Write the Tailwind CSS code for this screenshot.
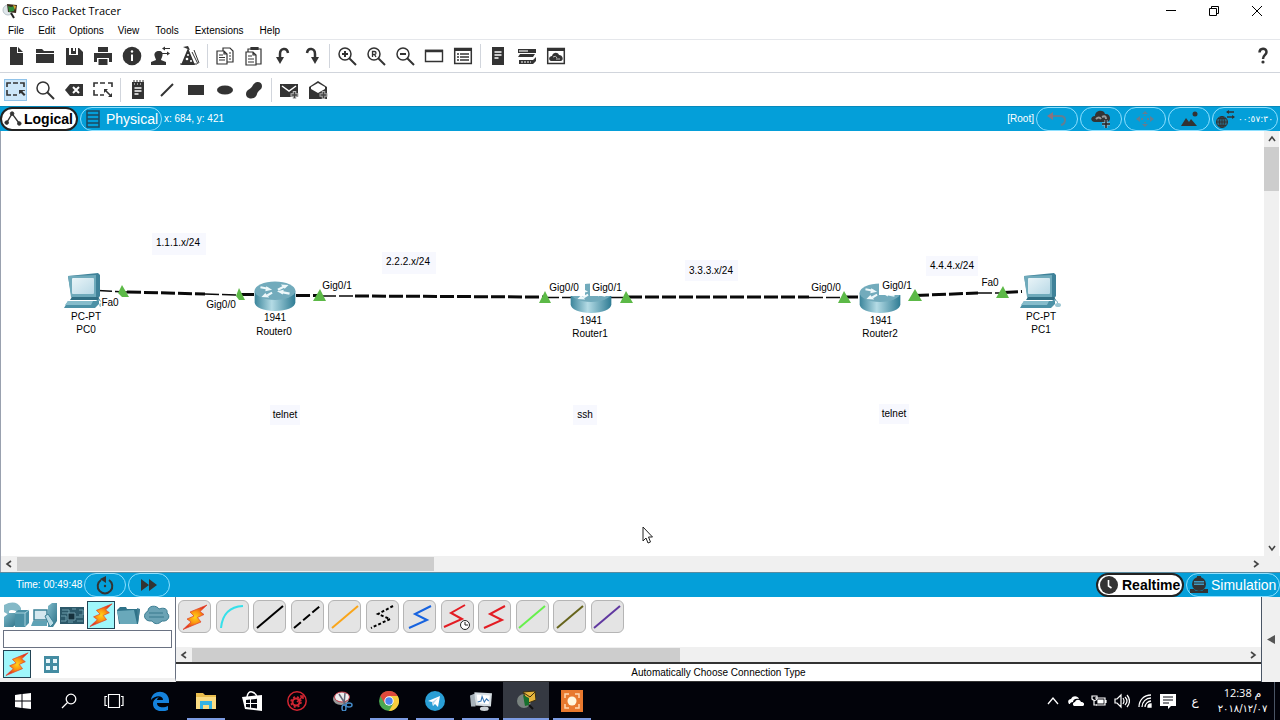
<!DOCTYPE html>
<html lang="en">
<head>
    <meta charset="utf-8">
    <title>Cisco Packet Tracer</title>
    <meta name="viewport" content="width=device-width, initial-scale=1">
    <script src="https://cdn.jsdelivr.net/npm/@tailwindcss/browser@4"></script>
</head>
<body class="h-screen flex flex-col overflow-hidden bg-white text-black text-[10px] leading-4 font-['Liberation_Sans',Arial,sans-serif]">

    <!-- Shared shapes -->
    <svg class="absolute size-0" aria-hidden="true">
        <defs>
            <radialGradient id="fire"><stop offset="0" stop-color="#ffd21a"/><stop offset=".45" stop-color="#fb9a12"/><stop offset="1" stop-color="#e3301b"/></radialGradient>
            <linearGradient id="metal"><stop offset="0" stop-color="#3b859b"/><stop offset=".42" stop-color="#b4dbe5"/><stop offset="1" stop-color="#2f7c94"/></linearGradient>
            <linearGradient id="teal" x2="1" y2="1"><stop offset="0" stop-color="#7db9c9"/><stop offset="1" stop-color="#2f7389"/></linearGradient>
            <linearGradient id="screen" x2="1" y2="1"><stop offset="0" stop-color="#e9f4f8"/><stop offset="1" stop-color="#b9d9e6"/></linearGradient>
            <symbol id="bolt" viewBox="0 0 28 28"><path d="M26 2 9 9l4 4-7 3 4 3L2 26.500 20 19l-3.500-4.500 6.500-3-4-3z" fill="url(#fire)" stroke="#e0402a" stroke-width=".7"/></symbol>
            <symbol id="router" viewBox="0 0 42 32">
                <path d="M0 10v12c0 5 9 9 21 9s21-4 21-9V10z" fill="url(#metal)"/>
                <ellipse cx="21" cy="10" rx="21" ry="9.500" fill="#72abbc"/>
                <path d="M6 6.500 14 8M24 9l6-3M18 12l-5 3M36 13l-8-1.500" fill="none" stroke="#eef8fa" stroke-width="2.200"/>
                <path d="M12 5.500 18 9l-7 1.500zM27 3.500 35 4l-4 4zM15 17l-8-.5 4-4zM30 9l-7 1.500 6 3.500z" fill="#eef8fa"/>
            </symbol>
            <symbol id="pc" viewBox="0 0 42 36">
                <path d="M4 3 34 0l2 2v21l-3 4H8z" fill="#3f8299"/>
                <path d="M4 3 32 2v22H7z" fill="#6faabb"/>
                <rect x="8" y="5" width="22" height="16" rx="1" fill="url(#screen)"/>
                <path d="M8 24h26l2 3H6z" fill="#316f84"/>
                <path d="M4 28h28l3-2v5l-4 4H0z" fill="#4c91a6"/>
                <path d="M4 28h25l-2 4H1z" fill="#86bccb"/>
                <path d="M34 27q4 0 4 4" fill="none" stroke="#8eb9c6"/><ellipse cx="38" cy="32" rx="3" ry="2" fill="#9cc7d3"/>
            </symbol>
        </defs>
    </svg>

    <!-- Title bar -->
    <header class="flex items-center h-[22px] shrink-0">
        <svg class="size-4 ml-[2px]" viewBox="0 0 16 16"><circle cx="6" cy="7" r="5" fill="#dfe6ea" stroke="#b8c2c8"/><path d="M5 1l10 1-1 8-8-1z" fill="#3d2b1c"/><path d="M6 3l3 1 4-1-1 5-5 1z" fill="#2f8c3b"/><path d="M11 2l3 1-1 4z" fill="#d9a531"/><path d="M9 10l3 5" stroke="#222" stroke-width="2"/></svg>
        <h1 class="ml-1 text-[11px] font-['Open_Sans',sans-serif]">Cisco Packet Tracer</h1>
        <div class="ml-auto flex">
            <button aria-label="Minimize" class="w-[43px] flex justify-center"><svg class="size-3" viewBox="0 0 12 12"><path d="M1 5.500h10" stroke="#000"/></svg></button>
            <button aria-label="Restore" class="w-[43px] flex justify-center"><svg class="size-3" viewBox="0 0 12 12" fill="none" stroke="#000"><path d="M1.500 3.500h7v7h-7zM3.500 3.500v-2h7v7h-2"/></svg></button>
            <button aria-label="Close" class="w-[43px] mr-[2px] flex justify-center"><svg class="size-3" viewBox="0 0 12 12" stroke="#000"><path d="M1 1l10 10M11 1 1 11"/></svg></button>
        </div>
    </header>

    <!-- Menu -->
    <nav class="flex h-[18px] shrink-0 items-center pl-2 gap-[14px] border-b border-gray-200">
        <button>File</button>
        <button>Edit</button>
        <button>Options</button>
        <button>View</button>
        <button class="ml-[2px]">Tools</button>
        <button class="ml-[2px]">Extensions</button>
        <button class="ml-[2px]">Help</button>
    </nav>

    <!-- Main toolbar -->
    <div class="flex items-center h-[33px] shrink-0 pl-px border-b border-gray-300 text-[#333]">
        <button aria-label="New" class="w-[29px] flex justify-center"><svg class="size-5" viewBox="0 0 20 20" fill="currentColor"><path d="M4 1h7v6h6v12H4zM12 1l5 5h-5z"/></svg></button>
        <button aria-label="Open" class="w-[29px] flex justify-center"><svg class="size-5" viewBox="0 0 20 20" fill="currentColor"><path d="M1 3h6l2 2h10v2H1zM1 8h18v9H1z"/></svg></button>
        <button aria-label="Save" class="w-[29px] flex justify-center"><svg class="size-5" viewBox="0 0 20 20" fill="currentColor"><path d="M2 2h3v7h9V2h1l4 4v13H2zM7 2h2v3h2V2h1v6H7z"/></svg></button>
        <button aria-label="Print" class="w-[29px] flex justify-center"><svg class="size-5" viewBox="0 0 20 20" fill="currentColor"><path d="M5 1h10v5H5zM1 7h18v9h-3v-4H4v4H1zM5.500 13h9v6h-9z"/></svg></button>
        <button aria-label="Network information" class="w-[29px] flex justify-center"><svg class="size-5" viewBox="0 0 20 20"><circle cx="10" cy="10" r="9.300" fill="currentColor"/><path d="M10 8.500V15" stroke="#fff" stroke-width="2" fill="none"/><circle cx="10" cy="5.500" r="1.200" fill="#fff"/></svg></button>
        <button aria-label="User profile" class="w-[29px] flex justify-center"><svg class="size-5" viewBox="0 0 20 20" fill="currentColor"><path d="M8 5c3 0 4 2 3.500 4.500S10 13 10 14l5 2v3H0v-3l5-2c0-1-1-2-1.500-4.500S5 5 8 5z"/><path d="M12 2.500h7M11 7.500h7" stroke="currentColor" stroke-width="1.200"/><path d="M14 .5v4l-3-2zM16 5.500v4l3-2z"/></svg></button>
        <button aria-label="Activity wizard" class="w-[29px] flex justify-center"><svg class="size-5" viewBox="0 0 20 20"><path d="M8 2l7 17H1zM3 1l5-1 2 4z" fill="currentColor"/><path d="M0 18h17M12 6l6 12M14 4l5 13" stroke="currentColor"/><circle cx="8" cy="9" r="1" fill="#fff"/><circle cx="7" cy="13" r="1.300" fill="#fff"/><circle cx="11" cy="15" r="1" fill="#fff"/></svg></button>
        <div class="w-[6px] flex justify-center"><span class="w-px h-6 bg-gray-300"></span></div>
        <button aria-label="Copy" class="w-[29px] flex justify-center"><svg class="size-5" viewBox="0 0 20 20" fill="#fff" stroke="currentColor" stroke-width="1.200"><path d="M8 2h7l3 3v11H8z"/><path d="M2 5h7l3 3v10H2zM9 5v3h3"/><path d="M4 9h4M4 11.500h6M4 14h6M14 7h2M14 10h2M14 13h2"/></svg></button>
        <button aria-label="Paste" class="w-[29px] flex justify-center"><svg class="size-5" viewBox="0 0 20 20" fill="#fff" stroke="currentColor" stroke-width="1.200"><path d="M4 3h13v15H4z"/><path d="M7 1.500h7v2H7z" fill="currentColor"/><path d="M2 6h7l3 3v10H2zM9 6v3h3"/><path d="M4 10h4M4 13h6M4 16h6"/></svg></button>
        <button aria-label="Undo" class="w-[29px] flex justify-center"><svg class="size-5" viewBox="0 0 20 20"><path d="M7 13V8c0-6 7-7 8-1" fill="none" stroke="currentColor" stroke-width="2.500"/><path d="M3 11h8l-4 7z" fill="currentColor"/></svg></button>
        <button aria-label="Redo" class="w-[29px] flex justify-center"><svg class="size-5" viewBox="0 0 20 20"><path d="M13 13V8c0-6-7-7-8-1" fill="none" stroke="currentColor" stroke-width="2.500"/><path d="M9 11h8l-4 7z" fill="currentColor"/></svg></button>
        <div class="w-[6px] flex justify-center"><span class="w-px h-6 bg-gray-300"></span></div>
        <button aria-label="Zoom in" class="w-[29px] flex justify-center"><svg class="size-5" viewBox="0 0 20 20" fill="none" stroke="currentColor" stroke-width="1.500"><circle cx="8" cy="8" r="6"/><path d="M12 12l7 7M5 8h6M8 5v6" stroke-width="2"/></svg></button>
        <button aria-label="Zoom reset" class="w-[29px] flex justify-center"><svg class="size-5" viewBox="0 0 20 20" fill="none" stroke="currentColor" stroke-width="1.500"><circle cx="8" cy="8" r="6"/><path d="M12 12l7 7" stroke-width="2"/><path d="M6.500 11V5.500h2c2 0 2 3 0 3h-2M8.500 8.500l1.500 2.500" stroke-width="1.300"/></svg></button>
        <button aria-label="Zoom out" class="w-[29px] flex justify-center"><svg class="size-5" viewBox="0 0 20 20" fill="none" stroke="currentColor" stroke-width="1.500"><circle cx="8" cy="8" r="6"/><path d="M12 12l7 7M5 8h6" stroke-width="2"/></svg></button>
        <button aria-label="View toggle" class="w-[29px] flex justify-center"><svg class="size-5" viewBox="0 0 20 20" fill="none" stroke="currentColor"><path d="M1.500 4.500h17v11h-17z" stroke-width="1.400"/><path d="M1 5h18" stroke-width="2.500"/></svg></button>
        <button aria-label="View list" class="w-[29px] flex justify-center"><svg class="size-5" viewBox="0 0 20 20" fill="none" stroke="currentColor" stroke-width="1.500"><path d="M1.700 2.500h16.600v15H1.700z"/><path d="M1 3.500h18" stroke-width="3"/><path d="M7 8h9M7 11h9M7 14h9M4 8h2M4 11h2M4 14h2"/></svg></button>
        <div class="w-[6px] flex justify-center"><span class="w-px h-6 bg-gray-300"></span></div>
        <button aria-label="Palette" class="w-[29px] flex justify-center"><svg class="size-5" viewBox="0 0 20 20"><path d="M4 1h12v18H4z" fill="currentColor"/><path d="M6.500 6h7M6.500 9h7M6.500 12h4" stroke="#fff" stroke-width="1.500"/></svg></button>
        <button aria-label="Custom devices" class="w-[29px] flex justify-center"><svg class="size-5" viewBox="0 0 20 20"><path d="M1 3h18v4H1zM3 8h15l-2 3H1zM2 14h14l3-3v4l-3 3H2z" fill="currentColor"/><path d="M2 5h9" stroke="#ccc" stroke-width="1.500"/><path d="M4 16h10" stroke="#fff" stroke-dasharray="2 1"/></svg></button>
        <button aria-label="Cluster" class="w-[29px] flex justify-center"><svg class="size-5" viewBox="0 0 20 20"><path d="M1.700 2.500h16.600v15H1.700z" fill="none" stroke="currentColor" stroke-width="1.500"/><path d="M1 3.500h18" stroke="currentColor" stroke-width="3"/><path d="M5 15c-3-1-2-5 1-5 1-4 6-4 7-1 4 0 5 5 2 6z" fill="currentColor"/><path d="M7 11q3-2 4 1M10 13h4" stroke="#bbb" fill="none"/></svg></button>
        <button aria-label="Help" class="ml-auto w-[34px] flex justify-center"><svg class="size-5" viewBox="0 0 20 20"><path d="M6.500 6.500c0-5 7-5 7-.5 0 3-3.500 3-3.500 7" fill="none" stroke="currentColor" stroke-width="2.500"/><circle cx="10" cy="16" r="1.600" fill="currentColor"/></svg></button>
    </div>

    <!-- Drawing toolbar -->
    <div class="flex items-center h-[33px] shrink-0 pl-px text-[#333]">
        <button aria-label="Select" class="w-[29px] flex justify-center"><svg class="w-[23px] h-[22px] bg-[#cde6f8] outline outline-1 -outline-offset-1 outline-[#90c3ea]" viewBox="0 0 23 22"><path d="M3 8V4h4M9 4h5M16 4h4v4M20 11v1M3 11v5h4M9 16h4" fill="none" stroke="currentColor" stroke-width="1.600"/><path d="M15 11h5l-1.500 1.500 3 3-1.500 1.500-3-3L15 15z" fill="currentColor"/></svg></button>
        <button aria-label="Inspect" class="w-[29px] flex justify-center"><svg class="size-5" viewBox="0 0 20 20" fill="none" stroke="currentColor" stroke-width="1.500"><circle cx="8" cy="8" r="6"/><path d="M12 12l7 7" stroke-width="2"/></svg></button>
        <button aria-label="Delete" class="w-[29px] flex justify-center"><svg class="size-5" viewBox="0 0 20 20"><path d="M1 10l5-6h13v12H6z" fill="currentColor"/><path d="M9 7l6 6M15 7l-6 6" stroke="#fff" stroke-width="2"/></svg></button>
        <button aria-label="Resize" class="w-[29px] flex justify-center"><svg class="size-5" viewBox="0 0 20 20" fill="none" stroke="currentColor" stroke-width="1.600"><path d="M1 7V3h4M7 3h5M15 3h4v4M1 10v5h4M7 15h4M12 10l6 6"/><path d="M11 9h4l-4 4zM19 17v-4l-4 4z" fill="currentColor" stroke="none"/></svg></button>
        <div class="w-[6px] flex justify-center"><span class="w-px h-6 bg-gray-300"></span></div>
        <button aria-label="Place note" class="w-[29px] flex justify-center"><svg class="size-5" viewBox="0 0 20 20"><path d="M4 2h12v17H4z" fill="currentColor"/><path d="M6 0v4M9 0v4M12 0v4M15 0v4" stroke="currentColor"/><path d="M6 4h8" stroke="#fff" stroke-dasharray="1 2"/><path d="M6.500 8h7M6.500 11h7M6.500 14h4" stroke="#fff" stroke-width="1.400"/></svg></button>
        <button aria-label="Draw line" class="w-[29px] flex justify-center"><svg class="size-5" viewBox="0 0 20 20"><path d="M4 16 16 4" stroke="currentColor" stroke-width="2"/></svg></button>
        <button aria-label="Draw rectangle" class="w-[29px] flex justify-center"><svg class="size-5" viewBox="0 0 20 20"><path d="M2 5h16v10H2z" fill="currentColor"/></svg></button>
        <button aria-label="Draw ellipse" class="w-[29px] flex justify-center"><svg class="size-5" viewBox="0 0 20 20"><ellipse cx="10" cy="10" rx="8" ry="4.500" fill="currentColor"/></svg></button>
        <button aria-label="Draw freeform" class="w-[29px] flex justify-center"><svg class="size-5" viewBox="0 0 20 20"><path d="M9 5c2-4 9-4 9 1 0 4-4 4-5 8-1 6-11 6-11 0 0-5 5-4 7-9z" fill="currentColor"/></svg></button>
        <div class="w-[6px] flex justify-center"><span class="w-px h-6 bg-gray-300"></span></div>
        <button aria-label="Add simple PDU" class="w-[29px] flex justify-center"><svg class="size-5" viewBox="0 0 20 20"><path d="M1 4h18v13H1z" fill="currentColor"/><path d="M3 6l7 5 7-5" fill="none" stroke="#fff" stroke-width="1.500"/><path d="M15.500 11v8M11.500 15h8" stroke="#bbb" stroke-width="3.500"/><path d="M15.500 12v6M12.500 15h6" stroke="#444" stroke-width="1.500"/></svg></button>
        <button aria-label="Add complex PDU" class="w-[29px] flex justify-center"><svg class="size-5" viewBox="0 0 20 20"><path d="M10 1l9 6v12H1V7z" fill="currentColor"/><path d="M10 3l7 4v2l-7 4-7-4V7z" fill="#fff"/><path d="M15.500 11v8M11.500 15h8" stroke="#aaa" stroke-width="3.500"/><path d="M15.500 12v6M12.500 15h6" stroke="#444" stroke-width="1.500"/></svg></button>
    </div>

    <!-- Workspace bar -->
    <div class="flex items-center h-[25px] shrink-0 bg-[#049fd9] text-white border-t border-[#0789bb]">
        <button class="flex items-center h-6 w-[78px] pl-[2px] gap-[2px] rounded-full bg-white text-black border-2 border-[#222] text-sm font-bold"><svg class="size-[18px] shrink-0" viewBox="0 0 20 20" stroke="#333" fill="#333"><path d="M3 14 9 4l8 11" fill="none" stroke-width="1.500"/><circle cx="3" cy="14" r="2"/><circle cx="9" cy="4" r="2"/><circle cx="17" cy="15" r="2"/></svg>Logical</button>
        <button class="flex items-center h-6 w-[82px] ml-[2px] pl-[3px] gap-1 rounded-full border border-[#8ee0ff] text-sm"><svg class="size-[18px] shrink-0" viewBox="0 0 18 18" fill="none" stroke="#1c4a60" stroke-width="1.500"><path d="M3 1h12v16H3zM3 5h12M3 9h12M3 13h12"/></svg>Physical</button>
        <span class="ml-[2px]">x: 684, y: 421</span>
        <span class="ml-auto mr-[2px]">[Root]</span>
        <div class="flex gap-[2px] mr-[2px]">
            <button aria-label="Back" class="w-[42px] h-6 flex items-center justify-center rounded-full border border-[#8ee0ff]"><svg class="size-5" viewBox="0 0 20 20"><path d="M4 7h9q5 0 5 4t-4 5" fill="none" stroke="#617f93" stroke-width="2"/><path d="M0 7l6-4v8z" fill="#8a7480"/></svg></button>
            <button aria-label="New cluster" class="w-[42px] h-6 flex items-center justify-center rounded-full border border-[#8ee0ff]"><svg class="size-5" viewBox="0 0 20 20"><path d="M4 13c-5 0-5-6 0-6 0-6 9-7 10-2 6-1 7 8 1 8z" fill="#333"/><path d="M5 10q3-3 5 0M11 8q4-2 4 2" stroke="#999" fill="none" stroke-width="2"/><path d="M15 11v8M11 15h8" stroke="#9bc" stroke-width="3"/><path d="M15 11v8M11 15h8" stroke="#222" stroke-width="1.500"/></svg></button>
            <button aria-label="Move object" class="w-[42px] h-6 flex items-center justify-center rounded-full border border-[#8ee0ff]"><svg class="size-5" viewBox="0 0 20 20" fill="#617f93"><path d="M10 2l3 3H7zM10 18l3-3H7zM1 10l4-3v6zM19 10l-4-3v6z"/><path d="M6 9h2v2H6zM12 9h2v2h-2zM9 6h2v1H9zM9 13h2v1H9z"/></svg></button>
            <button aria-label="Set background" class="w-[42px] h-6 flex items-center justify-center rounded-full border border-[#8ee0ff]"><svg class="size-5" viewBox="0 0 20 20" fill="#333"><path d="M2 17l5-8 3 4 2-3 6 7z"/><circle cx="16" cy="5" r="2.500"/></svg></button>
            <button class="w-[66px] h-6 pl-[2px] pr-1 flex items-center justify-between rounded-full border border-[#8ee0ff] text-[9px] font-['DejaVu_Sans',sans-serif]"><svg class="size-5 shrink-0" viewBox="0 0 20 20" fill="none" stroke="#333"><circle cx="7" cy="13" r="5.500" fill="#2d6880"/><path d="M1.500 13h11M7 7.500v11M3 9.500h8M3 16.500h8"/><ellipse cx="7" cy="13" rx="2.500" ry="5.500"/><path d="M12 3h7M12 8h7" stroke-width="1.500"/><path d="M14 1v4l-3-2zM17 6v4l3-2z" fill="#333" stroke="none"/></svg><span dir="ltr">٠٠:٥٧:٣٠</span></button>
        </div>
    </div>

    <!-- Topology canvas with its scrollbars -->
    <main class="flex-1 min-h-0 flex flex-col border-l border-gray-400">
        <div class="flex-1 min-h-0 flex">
            <div class="relative flex-1 overflow-hidden">
                <!-- drawn in workspace units, y starts 131 below the window's top -->
                <svg class="absolute top-0 left-0 w-[1262px] h-[425px]" viewBox="1 131 1262 425" font-size="10" text-anchor="middle">
                    <g stroke="#0a0a0a" stroke-width="3" stroke-dasharray="14 3">
                        <path d="M127 292 205 294M296 295.500H318M355 296 545 297M628 297H809M915 295.500 978 293M1004 292.500 1022 291.500M844 297H862M240 294.500H257"/>
                        <path d="M98 290.500 127 292M205 294 240 295M322 296 355 296M545 297.500H572M609 297.500H628M809 297.500H844M978 293 1004 293" stroke-width="1.500"/>
                    </g>
                    <use href="#pc" x="64" y="273" width="42" height="36"/>
                    <use href="#pc" x="1020" y="273" width="42" height="36"/>
                    <use href="#router" x="254" y="281" width="42" height="31"/>
                    <use href="#router" x="570" y="283" width="42" height="31"/>
                    <use href="#router" x="859" y="283" width="42" height="31"/>
                    <path d="M547 280h38v16h-38zM590 280h35v16h-35zM879 278h35v17h-35zM101 297h21v11h-21z" fill="#fff"/>
                    <path d="M122 285l-4 8 4 4h7zM239 288l-3 8 3 4h6zM320 289l-7 12h13zM545 291l-6 12h12zM626 291l-6 12h13zM844 291l-6 12h13zM915 289l-7 12h14zM1003 286l-7 12h13z" fill="#5cb947"/>
                    <path d="M152 233h54v22h-54zM382 252h54v22h-54zM685 260h53v21h-53zM926 256h52v20h-52zM270 405h30v20h-30zM573 405h24v20h-24zM879 404h30v20h-30z" fill="#f7f8fe"/>
                    <text x="178" y="246">1.1.1.x/24</text>
                    <text x="408" y="265">2.2.2.x/24</text>
                    <text x="711" y="274">3.3.3.x/24</text>
                    <text x="952" y="269">4.4.4.x/24</text>
                    <text x="110" y="306">Fa0</text>
                    <text x="221" y="308">Gig0/0</text>
                    <text x="337" y="289">Gig0/1</text>
                    <text x="564" y="291">Gig0/0</text>
                    <text x="607" y="291">Gig0/1</text>
                    <text x="826" y="291">Gig0/0</text>
                    <text x="897" y="289">Gig0/1</text>
                    <text x="990" y="286">Fa0</text>
                    <text x="86" y="320">PC-PT</text>
                    <text x="86" y="333">PC0</text>
                    <text x="275" y="321">1941</text>
                    <text x="274" y="335">Router0</text>
                    <text x="591" y="324">1941</text>
                    <text x="590" y="337">Router1</text>
                    <text x="881" y="324">1941</text>
                    <text x="880" y="337">Router2</text>
                    <text x="1041" y="320">PC-PT</text>
                    <text x="1041" y="333">PC1</text>
                    <text x="285" y="418">telnet</text>
                    <text x="585" y="418">ssh</text>
                    <text x="894" y="417">telnet</text>
                    <path d="M643 527v14l3-3 2 5 2.500-1-2-5h4z" fill="#fff" stroke="#222"/>
                </svg>
            </div>
            <div class="w-[15px] mr-px flex flex-col items-center bg-[#f0f0f0]">
                <button aria-label="Scroll up" class="h-4 flex items-center"><svg class="size-2" viewBox="0 0 8 8" fill="none" stroke="#444" stroke-width="1.600"><path d="M1 6l3-4 3 4"/></svg></button>
                <div class="w-full h-11 bg-[#cdcdcd]"></div>
                <button aria-label="Scroll down" class="h-4 mt-auto flex items-center"><svg class="size-2" viewBox="0 0 8 8" fill="none" stroke="#444" stroke-width="1.600"><path d="M1 2l3 4 3-4"/></svg></button>
            </div>
        </div>
        <div class="flex items-center h-4 bg-[#f0f0f0] pr-4">
            <button aria-label="Scroll left" class="w-4 flex justify-center"><svg class="size-2" viewBox="0 0 8 8" fill="none" stroke="#444" stroke-width="1.600"><path d="M6 1 2 4l4 3"/></svg></button>
            <div class="w-[33%] h-[14px] bg-[#cdcdcd]"></div>
            <button aria-label="Scroll right" class="w-4 ml-auto flex justify-center"><svg class="size-2" viewBox="0 0 8 8" fill="none" stroke="#444" stroke-width="1.600"><path d="M2 1l4 3-4 3"/></svg></button>
        </div>
    </main>

    <!-- Time bar -->
    <div class="flex items-center h-[25px] shrink-0 bg-[#049fd9] text-white border-t border-[#5a8ba0]">
        <span class="ml-4">Time: 00:49:48</span>
        <button aria-label="Power cycle devices" class="w-[42px] h-6 ml-[2px] flex items-center justify-center rounded-full border border-[#8ee0ff]"><svg class="size-5" viewBox="0 0 20 20"><path d="M6 5a7.300 7.300 0 1 0 8 0" fill="none" stroke="#333" stroke-width="2"/><path d="M5 4l6-3v7z" fill="#333"/><circle cx="10" cy="11" r="1.200" fill="#333"/></svg></button>
        <button aria-label="Fast forward time" class="w-[42px] h-6 ml-[2px] flex items-center justify-center rounded-full border border-[#8ee0ff]"><svg class="size-5" viewBox="0 0 20 20" fill="#333"><path d="M2 4l8 6-8 6zM10 4l8 6-8 6z"/></svg></button>
        <button class="flex items-center h-6 w-[88px] ml-auto pl-[2px] gap-1 rounded-full bg-white text-black border-2 border-[#222] text-sm font-bold"><svg class="size-[18px] shrink-0" viewBox="0 0 18 18"><circle cx="9" cy="9" r="9" fill="#333"/><path d="M8.500 4v6l3 2" stroke="#fff" stroke-width="1.600" fill="none"/></svg>Realtime</button>
        <button class="flex items-center h-6 w-[94px] ml-[2px] pl-[2px] gap-[2px] rounded-full border border-[#8ee0ff] text-sm"><svg class="size-5 shrink-0" viewBox="0 0 20 20" fill="#333"><path d="M8 1h4v2H8zM1 14h4l2 2h6l2-2h4v4H1z"/><circle cx="10" cy="9" r="7"/><path d="M5 6h10v4H5z" fill="#3f9ac0"/><path d="M5 8h10" stroke="#333"/></svg>Simulation</button>
    </div>

    <!-- Device and connection pickers -->
    <footer class="flex h-[85px] shrink-0 bg-[#f0f0f0]">
        <div class="w-[176px] shrink-0 flex flex-col bg-white border-r border-gray-500 border-b-4 border-b-[#f0f0f0] pl-[3px] pt-1">
            <div class="grid grid-cols-6 items-center h-7 mr-1">
                <button aria-label="Network devices"><svg class="size-[27px]" viewBox="0 0 27 27"><path d="M1 3q12-6 17 3v6h-5V9q-5-2-7 0v4l-5-3z" fill="#84b9c7"/><path d="M1 15l5-4h8v11l-4 3H1z" fill="url(#teal)"/><path d="M12 11l3-3h11v13l-4 4H12z" fill="#4a90a5"/><path d="M12 11h10v13M22 11l4-3" stroke="#a4d0dc" fill="none"/></svg></button>
                <button aria-label="End devices"><svg class="size-[27px]" viewBox="0 0 27 27"><path d="M3 8h13v10H3z" fill="#d4e8ef" stroke="#3b8197" stroke-width="1.500"/><path d="M2 19h14v5H0z" fill="#5fa2b5"/><path d="M17 4l4-3h5v18l-4 6h-5z" fill="url(#teal)"/><path d="M14 14l3-2 6 9-4 4z" fill="#b8dbe5" stroke="#3b8197"/></svg></button>
                <button aria-label="Components"><svg class="size-[27px]" viewBox="0 0 27 27"><path d="M1 5h24v17H1z" fill="#2c5869"/><path d="M3 8h7v3H3M13 7h4M20 8h4v5h-4M2 14h5v5H2M17 15h7M18 19h6M9 20h5" fill="none" stroke="#6c9dac"/><path d="M9 11h7v7H9z" fill="#15303c" stroke="#6d9aaa"/></svg></button>
                <button aria-label="Connections"><svg class="size-7 bg-[#9ff7fb] border border-[#245]"><use href="#bolt"/></svg></button>
                <button aria-label="Miscellaneous"><svg class="size-[27px]" viewBox="0 0 27 27"><path d="M2 8l3-3h6l1 2h13l-2 15H4z" fill="#2f7389"/><path d="M2 9l17-1 3 14H5z" fill="#69a8ba"/><path d="M22 6l3 1-2 14" fill="#417f94"/></svg></button>
                <button aria-label="Multiuser connection"><svg class="size-[27px]" viewBox="0 0 27 27"><path d="M5 9c0-6 9-6 11-2 5-2 9 0 8 4 4 3 1 9-5 8-4 4-8 3-10 0-8 1-10-7-4-10z" fill="#6ba3b5" stroke="#3c7e93"/><path d="M6 11h14M6 15h15" stroke="#38788d"/></svg></button>
            </div>
            <input type="text" aria-label="Search devices" class="h-[19px] w-[169px] mt-[1px] border border-gray-500 px-1">
            <div class="flex items-center gap-3 mt-[2px]">
                <button aria-label="Connections group"><svg class="size-7 bg-[#9ff7fb] border border-[#245]"><use href="#bolt"/></svg></button>
                <button aria-label="Structured cabling"><svg class="size-[17px] block" viewBox="0 0 17 17"><path d="M1 0h15v17H1z" fill="#448ca2"/><path d="M3 3h4v4H3zM10 3h4v4h-4zM3 10h4v4H3zM10 10h4v4h-4z" fill="#eaf6fa"/></svg></button>
            </div>
        </div>
        <div class="flex-1 min-w-0 flex flex-col bg-white border-r border-gray-600">
            <div class="grid grid-cols-12 w-[450px] h-[50px] pt-[3px] justify-items-center items-start">
                <button aria-label="Automatic" class="size-[33px] rounded-md bg-[#e4e4e4] border border-[#b5b5b5] flex items-center justify-center"><svg class="size-7"><use href="#bolt"/></svg></button>
                <button aria-label="Console" class="size-[33px] rounded-md bg-[#e4e4e4] border border-[#b5b5b5] flex items-center justify-center"><svg class="size-7" viewBox="0 0 28 28"><path d="M3 25Q5 4 25 3" fill="none" stroke="#35e0ea" stroke-width="2"/></svg></button>
                <button aria-label="Copper straight-through" class="size-[33px] rounded-md bg-[#e4e4e4] border border-[#b5b5b5] flex items-center justify-center"><svg class="size-7" viewBox="0 0 28 28"><path d="M1 25 27 3" stroke="#000" stroke-width="2"/></svg></button>
                <button aria-label="Copper cross-over" class="size-[33px] rounded-md bg-[#e4e4e4] border border-[#b5b5b5] flex items-center justify-center"><svg class="size-7" viewBox="0 0 28 28"><path d="M1 25 27 3" stroke="#000" stroke-width="2" stroke-dasharray="9 3"/></svg></button>
                <button aria-label="Fiber" class="size-[33px] rounded-md bg-[#e4e4e4] border border-[#b5b5b5] flex items-center justify-center"><svg class="size-7" viewBox="0 0 28 28"><path d="M1 25 27 3" stroke="#f9a51a" stroke-width="2"/></svg></button>
                <button aria-label="Phone" class="size-[33px] rounded-md bg-[#e4e4e4] border border-[#b5b5b5] flex items-center justify-center"><svg class="size-7" viewBox="0 0 28 28"><path d="M25 3 10 11l12 5L3 25" fill="none" stroke="#000" stroke-width="2" stroke-dasharray="3 2"/></svg></button>
                <button aria-label="Coaxial" class="size-[33px] rounded-md bg-[#e4e4e4] border border-[#b5b5b5] flex items-center justify-center"><svg class="size-7" viewBox="0 0 28 28"><path d="M25 3 9 11l12 6L3 25" fill="none" stroke="#1763df" stroke-width="2"/></svg></button>
                <button aria-label="Serial DCE" class="size-[33px] rounded-md bg-[#e4e4e4] border border-[#b5b5b5] flex items-center justify-center"><svg class="size-7" viewBox="0 0 28 28"><path d="M22 2 8 10l11 6L1 24" fill="none" stroke="#e31c23" stroke-width="2"/><circle cx="22" cy="22" r="4.500" fill="#fff" stroke="#222"/><path d="M22 19v3h3" fill="none" stroke="#222"/></svg></button>
                <button aria-label="Serial DTE" class="size-[33px] rounded-md bg-[#e4e4e4] border border-[#b5b5b5] flex items-center justify-center"><svg class="size-7" viewBox="0 0 28 28"><path d="M24 3 9 11l12 6L3 25" fill="none" stroke="#e31c23" stroke-width="2"/></svg></button>
                <button aria-label="Octal" class="size-[33px] rounded-md bg-[#e4e4e4] border border-[#b5b5b5] flex items-center justify-center"><svg class="size-7" viewBox="0 0 28 28"><path d="M1 25 27 3" stroke="#66f04c" stroke-width="2"/></svg></button>
                <button aria-label="IoT custom cable" class="size-[33px] rounded-md bg-[#e4e4e4] border border-[#b5b5b5] flex items-center justify-center"><svg class="size-7" viewBox="0 0 28 28"><path d="M1 25 27 3" stroke="#66641c" stroke-width="2"/></svg></button>
                <button aria-label="USB" class="size-[33px] rounded-md bg-[#e4e4e4] border border-[#b5b5b5] flex items-center justify-center"><svg class="size-7" viewBox="0 0 28 28"><path d="M1 25 27 3" stroke="#6038a0" stroke-width="2"/></svg></button>
            </div>
            <div class="flex items-center h-[15px] bg-[#f0f0f0]">
                <button aria-label="Scroll connections left" class="w-4 flex justify-center"><svg class="size-2" viewBox="0 0 8 8" fill="none" stroke="#444" stroke-width="1.600"><path d="M6 1 2 4l4 3"/></svg></button>
                <div class="w-[45%] h-[14px] bg-[#cdcdcd]"></div>
                <button aria-label="Scroll connections right" class="w-4 ml-auto flex justify-center"><svg class="size-2" viewBox="0 0 8 8" fill="none" stroke="#444" stroke-width="1.600"><path d="M2 1l4 3-4 3"/></svg></button>
            </div>
            <p class="flex-1 flex items-center justify-center pt-px border-t-2 border-b border-[#333]">Automatically Choose Connection Type</p>
        </div>
        <button aria-label="Show packet list" class="w-[18px] flex items-center justify-end pr-1"><svg class="size-[9px]" viewBox="0 0 9 9"><path d="M8 0v9L0 4.500z" fill="#555"/></svg></button>
    </footer>

    <!-- Windows taskbar -->
    <div class="flex h-[38px] shrink-0 bg-[#02030a] text-white">
        <div class="grid grid-cols-13 w-[595px]">
            <button aria-label="Start" class="flex items-center justify-center"><svg class="size-4" viewBox="0 0 16 16" fill="#fff"><path d="M0 2l6.500-1v6.500H0zM7.500 1 16 0v7.500H7.500zM0 8.500h6.500V15L0 14zM7.500 8.500H16V16l-8.500-1z"/></svg></button>
            <button aria-label="Search" class="flex items-center justify-center"><svg class="size-4" viewBox="0 0 16 16" fill="none" stroke="#fff" stroke-width="1.300"><circle cx="10" cy="6" r="4.800"/><path d="M6.500 9.500 1 15"/></svg></button>
            <button aria-label="Task view" class="flex items-center justify-center"><svg class="size-5" viewBox="0 0 20 20" fill="none" stroke="#fff" stroke-width="1.200"><path d="M4.500 3.500h11v13h-11zM3 5.500H1v9h2M17 5.500h2v9h-2"/></svg></button>
            <button aria-label="Edge" class="flex items-center justify-center"><svg class="size-5" viewBox="0 0 20 20"><path d="M1 9C2-2 18-2 19 9v3H7c0 5 7 5 11 3v4c-6 3-15 1-15-6 0-4 3-6 6-7-1 1-2 2-2 3h6c0-5-8-5-12 0z" fill="#1582dc"/></svg></button>
            <button aria-label="File Explorer" class="flex items-center justify-center border-b-2 border-[#7c9be2] mx-1 pt-[2px]"><svg class="size-5" viewBox="0 0 20 20"><path d="M0 2h7l2 2h11v14H0z" fill="#e9bd4d"/><path d="M0 6h20v12H0z" fill="#fbdc83"/><path d="M4 18v-8h12v8h-3v-4H7v4z" fill="#35b3e4"/></svg></button>
            <button aria-label="Store" class="flex items-center justify-center"><svg class="size-5" viewBox="0 0 20 20"><path d="M5 6q1-6 5-5t5 5" fill="none" stroke="#fff" stroke-width="1.500"/><path d="M0 6l20-2v16l-17-2z" fill="#fff"/><path d="M4 9l4-.5V12H4zM9 8.500l6-.7V12H9zM4 13h4v3.500L4 16zM9 13h6v4.500l-6-.8z" fill="#05070f"/></svg></button>
            <button aria-label="Security" class="flex items-center justify-center"><svg class="size-5" viewBox="0 0 20 20" fill="none" stroke="#d32632"><circle cx="10" cy="10" r="9.200" stroke-width="1.500"/><circle cx="9" cy="11" r="3.500" stroke-width="2"/><circle cx="9" cy="11" r="5" stroke-width="1.500" stroke-dasharray="2 2"/><path d="M10 11l5-5M13 5h3v3" stroke-width="1.500"/></svg></button>
            <button aria-label="Snipping Tool" class="flex items-center justify-center"><svg class="size-5" viewBox="0 0 20 20"><ellipse cx="8" cy="8" rx="8" ry="6" fill="#999"/><ellipse cx="9" cy="6" rx="7.500" ry="5" fill="#eee" stroke="#c33747"/><path d="M6 3l7 11M12 2l-1 12" stroke="#667" stroke-width="1.500"/><g fill="none" stroke="#4388c5" stroke-width="1.500"><ellipse cx="11" cy="17" rx="2" ry="3"/><ellipse cx="16" cy="14" rx="3" ry="2"/></g></svg></button>
            <button aria-label="Chrome" class="flex items-center justify-center border-b-2 border-[#7c9be2] mx-1 pt-[2px]"><svg class="size-5" viewBox="0 0 20 20"><circle cx="10" cy="10" r="10" fill="#4aa851"/><path d="M10 10 1.300 5A10 10 0 0 1 18.700 5z" fill="#de493c"/><path d="M10 5h8.700A10 10 0 0 1 10 20l4.300-7.500z" fill="#f9cd3e"/><path d="M1.300 5 6 13l4-8z" fill="#de493c"/><circle cx="10" cy="10" r="4.700" fill="#fff"/><circle cx="10" cy="10" r="3.700" fill="#4d85ee"/></svg></button>
            <button aria-label="Telegram" class="flex items-center justify-center border-b-2 border-[#7c9be2] mx-1 pt-[2px]"><svg class="size-5" viewBox="0 0 20 20"><circle cx="10" cy="10" r="10" fill="#299ed5"/><path d="M3 10l12-5-2 11-3-3-2 2-1-4z" fill="#fff"/><path d="M7 11l6-4-4 5-1 3z" fill="#b8d8ea"/></svg></button>
            <button aria-label="Task Manager" class="flex items-center justify-center border-b-2 border-[#7c9be2] mx-1 pt-[2px]"><svg class="size-[22px]" viewBox="0 0 20 20"><path d="M0 5l5-2v12H1z" fill="#a7b2ba"/><path d="M4 2l16 1-1 12-14-1z" fill="#d5dde2"/><path d="M6 4l12 1-1 8-10-1z" fill="#fff"/><path d="M7 11l3-1 1-4 2 5 2-3 2 2" stroke="#3a78b5" fill="none"/><ellipse cx="13" cy="17" rx="4" ry="2" fill="#ccd2d6"/></svg></button>
            <button aria-label="Packet Tracer" class="flex items-center justify-center border-b-2 border-[#7c9be2] bg-[#353942]"><svg class="size-5" viewBox="0 0 20 20"><circle cx="8" cy="11" r="7" fill="#79837f"/><path d="M7 2l12-1 1 9-8 3z" fill="#e5b43c" stroke="#3a2e10"/><path d="M8 3l6 4 5-5" fill="none" stroke="#3a2e10"/><path d="M7 5l6 3v7l-4 1z" fill="#17702d"/><path d="M13 15l4 4" stroke="#111" stroke-width="2"/></svg></button>
            <button aria-label="Screen recorder" class="flex items-center justify-center border-b-2 border-[#7c9be2] mx-1 pt-[2px]"><svg class="size-[22px]" viewBox="0 0 22 22"><path d="M0 0h22v22H0z" fill="#e8792e"/><circle cx="11" cy="11" r="4.500" fill="#fff7df"/><path d="M4 8V4h4M14 4h4v4M18 14v4h-4M8 18H4v-4" stroke="#ffd7b0" stroke-width="1.500" fill="none"/></svg></button>
        </div>
        <div class="ml-auto flex items-center">
            <button aria-label="Show hidden icons" class="w-[23px] flex justify-center"><svg class="size-4" viewBox="0 0 16 16" fill="none" stroke="#fff" stroke-width="1.300"><path d="M3 11l5-6 5 6"/></svg></button>
            <button aria-label="OneDrive" class="w-[23px] flex justify-center"><svg class="size-4" viewBox="0 0 16 16" fill="#fff"><path d="M1 11c-2-3 0-5 2-5 2-4 7-3 8 0-4-1-6 1-6 3-2 0-3 1-3 2zM6 13c-2-1-1-4 1-4 1-3 5-3 6 0 4 0 4 4 1 4z"/></svg></button>
            <button aria-label="Battery" class="w-[23px] flex justify-center"><svg class="size-4" viewBox="0 0 16 16" fill="none" stroke="#fff" stroke-width="1.200"><path d="M4 5h10v7H5M15 7v3"/><path d="M7 7h5v3H7z" fill="#fff"/><path d="M1 3h5v3q-2 3-5 0zM3 8v4h3"/></svg></button>
            <button aria-label="Volume" class="w-[23px] flex justify-center"><svg class="size-4" viewBox="0 0 16 16" fill="none" stroke="#fff" stroke-width="1.200"><path d="M1 6h2l4-4v12l-4-4H1zM9 5q2 3 0 6M11 4q4 4 0 8M13 2q5 6 0 12"/></svg></button>
            <button aria-label="Network" class="w-[23px] flex justify-center"><svg class="size-4" viewBox="0 0 16 16" fill="none" stroke="#fff" stroke-width="1.300"><path d="M2 14C2 7 7 2 14 2M5 14c0-5 4-9 9-9M8 14c0-3 3-6 6-6"/><path d="M11 14q0-3 3-3v3z" fill="#fff"/></svg></button>
            <button aria-label="Notifications" class="w-[23px] flex justify-center"><svg class="size-4" viewBox="0 0 16 16"><path d="M0 1h16v12h-5l-3 3v-3H0z" fill="#fff"/><path d="M3 4h10M3 7h10M3 10h6" stroke="#05070f"/></svg></button>
            <button class="w-8 text-center text-xs font-['DejaVu_Sans',sans-serif]">ع</button>
            <button class="w-[64px] mr-[5px] h-full border-r border-gray-600 text-center">
                <span dir="ltr" class="block text-[11px] font-['Open_Sans','DejaVu_Sans',sans-serif]">12:38 <bdi>م</bdi></span>
                <span dir="ltr" class="block text-[10px] font-['DejaVu_Sans',sans-serif]">٢٠١٨/١٢/٠٧</span>
            </button>
        </div>
    </div>
</body>
</html>
